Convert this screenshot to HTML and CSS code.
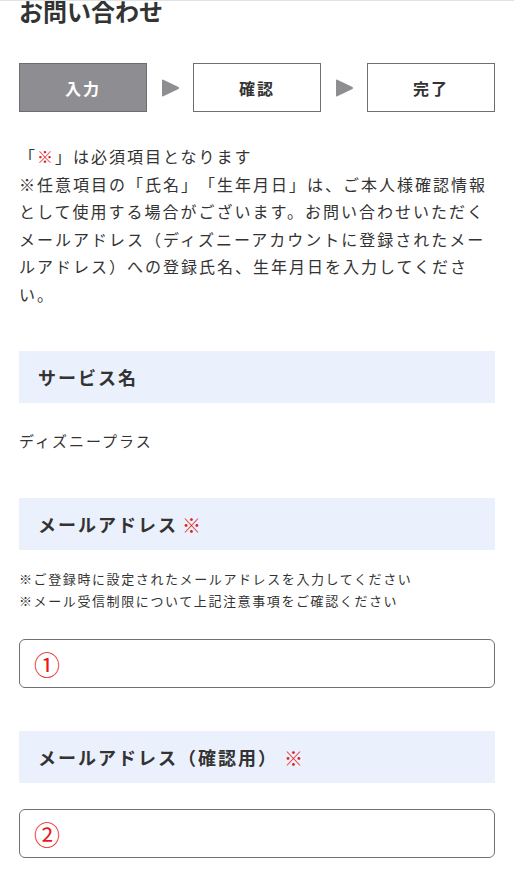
FILE: index.html
```html
<!DOCTYPE html>
<html lang="ja">
<head>
<meta charset="utf-8">
<title>お問い合わせ</title>
<link rel="stylesheet" href="styles.css">
</head>
<body>
<div class="page">
  <h1 class="title">お問い合わせ</h1>
  <ol class="steps">
    <li class="step step-active">入力</li>
    <li class="arrow"><svg width="19" height="18" viewBox="0 0 19 18"><path d="M1 1.5 Q1 0 2.3 0.7 L17.5 8.1 Q18.6 9 17.5 9.9 L2.3 17.3 Q1 18 1 16.5 Z" fill="#8e8e92"/></svg></li>
    <li class="step">確認</li>
    <li class="arrow"><svg width="19" height="18" viewBox="0 0 19 18"><path d="M1 1.5 Q1 0 2.3 0.7 L17.5 8.1 Q18.6 9 17.5 9.9 L2.3 17.3 Q1 18 1 16.5 Z" fill="#8e8e92"/></svg></li>
    <li class="step">完了</li>
  </ol>
  <p class="intro">「<span class="req">※</span>」は必須項目となります<br>※任意項目の「氏名」「生年月日」は、ご本人様確認情報として使用する場合がございます。お問い合わせいただくメールアドレス（ディズニーアカウントに登録されたメールアドレス）への登録氏名、生年月日を入力してください。</p>

  <section class="field field-service">
    <h2 class="field-head">サービス名</h2>
    <p class="field-value">ディズニープラス</p>
  </section>

  <section class="field field-mail">
    <h2 class="field-head">メールアドレス<span class="req">※</span></h2>
    <p class="field-note">※ご登録時に設定されたメールアドレスを入力してください<br>※メール受信制限について上記注意事項をご確認ください</p>
    <div class="input"><span class="num">①</span></div>
  </section>

  <section class="field field-mail2">
    <h2 class="field-head">メールアドレス（確認用）<span class="req req-gap">※</span></h2>
    <div class="input input-2"><span class="num">②</span></div>
  </section>
</div>
</body>
</html>
```
FILE: styles.css
```css
* { box-sizing: border-box; }
html, body { margin: 0; padding: 0; background: #fff; }
body {
  font-family: "Noto Sans CJK JP", "Noto Sans", sans-serif;
  color: #333;
  border-top: 1px solid #e2e2e2;
  overflow: hidden;
  height: 888px;
  text-spacing-trim: space-all;
}
.page { padding: 0 19px; }
.title {
  margin: -6px 0 0;
  font-size: 24px;
  line-height: 32px;
  font-weight: 700;
  color: #333;
}
.steps {
  list-style: none;
  margin: 36px 0 0;
  padding: 0;
  display: flex;
  align-items: center;
  justify-content: space-between;
}
.step {
  width: 128px;
  height: 49px;
  border: 1px solid #6f6f6f;
  display: flex;
  align-items: center;
  justify-content: center;
  font-size: 16px;
  font-weight: 700;
  letter-spacing: 2px;
  color: #333;
  background: #fff;
}
.step-active { background: #8e8e92; color: #fff; border-color: #6d6d70; }
.arrow { display: flex; width: 19px; height: 18px; }
.intro {
  margin: 31px 0 0;
  font-size: 16px;
  line-height: 27.5px;
  letter-spacing: 2px;
}
.req { color: #e0201b; font-weight: 400; }
.field-head .req { font-size: 19px; margin-left: 4px; }
.field-head .req-gap { margin-left: 6px; }
.field-head {
  margin: 0;
  height: 52px;
  background: #ebf1fc;
  padding: 0 19px;
  display: flex;
  align-items: center;
  font-size: 18px;
  font-weight: 700;
  letter-spacing: 2px;
  color: #333;
}
.field-service { margin-top: 43px; }
.field-value {
  margin: 26px 0 0;
  font-size: 15px;
  line-height: 24px;
  letter-spacing: 2px;
}
.field-mail { margin-top: 45px; }
.field-note {
  margin: 18px 0 0;
  font-size: 13px;
  line-height: 22px;
  letter-spacing: 1.6px;
}
.input {
  margin-top: 27px;
  height: 49px;
  border: 1px solid #707070;
  border-radius: 6px;
  display: flex;
  align-items: center;
  padding-left: 14px;
}
.num { color: #e81818; font-size: 26px; line-height: 1; }
.field-mail2 { margin-top: 43px; }
.input-2 { margin-top: 26px; }
```
